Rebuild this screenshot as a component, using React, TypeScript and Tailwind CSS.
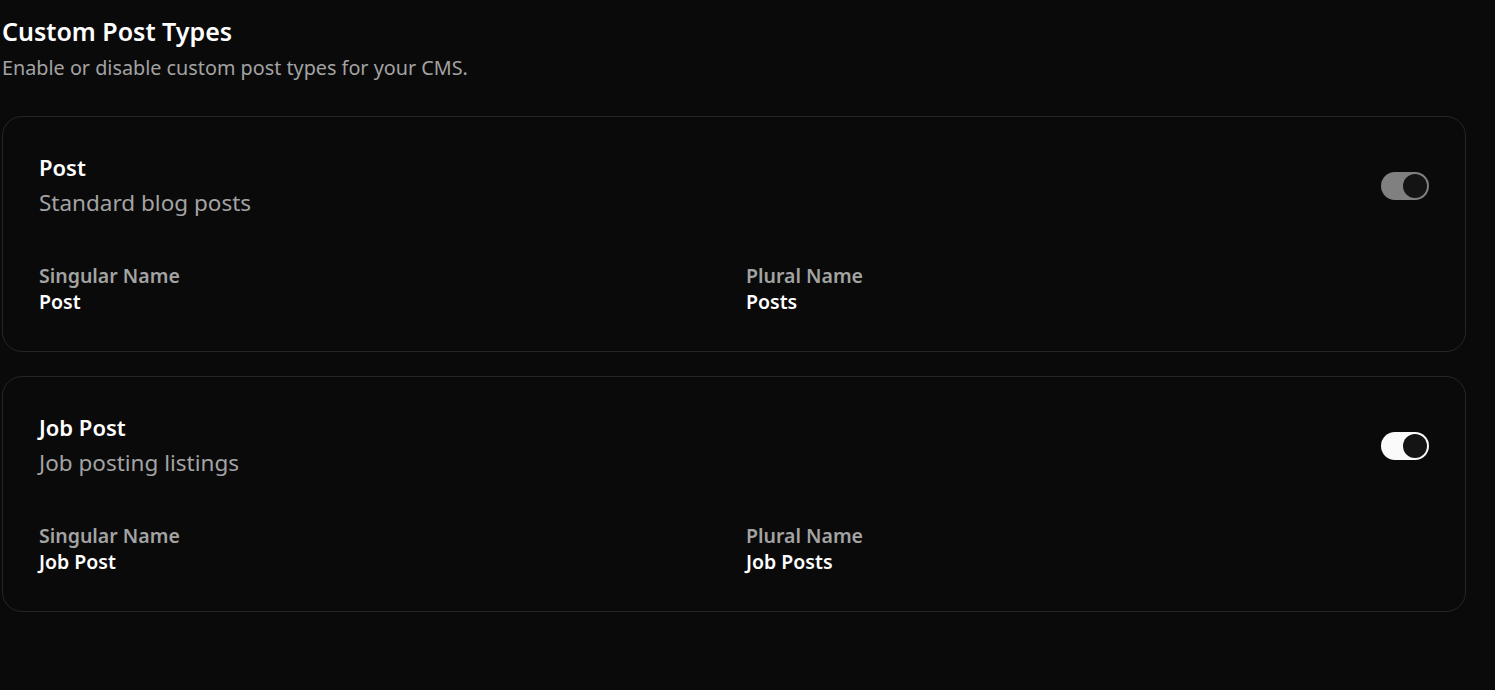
import { useState } from 'react';

type PostType = {
  id: string;
  name: string;
  description: string;
  singular: string;
  plural: string;
  enabled: boolean;
  muted?: boolean;
};

const initialTypes: PostType[] = [
  { id: 'post', name: 'Post', description: 'Standard blog posts', singular: 'Post', plural: 'Posts', enabled: true, muted: true },
  { id: 'job', name: 'Job Post', description: 'Job posting listings', singular: 'Job Post', plural: 'Job Posts', enabled: true },
];

function Toggle({ on, muted, onChange }: { on: boolean; muted?: boolean; onChange: () => void }) {
  return (
    <button
      type="button"
      onClick={onChange}
      className={`flex h-7 w-12 shrink-0 items-center rounded-full p-0.5 ${on ? 'justify-end' : 'justify-start'} ${
        muted ? 'bg-[#808080]' : 'bg-[#fafafa]'
      }`}
    >
      <span className="h-6 w-6 rounded-full bg-[#141414]" />
    </button>
  );
}

export default function App() {
  const [types, setTypes] = useState(initialTypes);

  const toggle = (id: string) =>
    setTypes((prev) => prev.map((t) => (t.id === id ? { ...t, enabled: !t.enabled } : t)));

  return (
    <div
      className="min-h-screen bg-[#0a0a0a] pl-[2px] pr-[29px] pt-[14px] text-white"
      style={{ fontFamily: '"Noto Sans", "Open Sans", sans-serif' }}
    >
      <h1 className="text-[25px] font-semibold leading-[34px]">Custom Post Types</h1>
      <p className="mt-[6px] text-[19.8px] leading-[28px] text-[#a3a3a3]">Enable or disable custom post types for your CMS.</p>

      <div className="mt-[34px] flex flex-col gap-6">
        {types.map((t) => (
          <div key={t.id} className="rounded-[20px] border border-[#262626] px-9 pb-9 pt-9">
            <div className="flex items-start justify-between">
              <div>
                <h2 className="text-[22px] font-semibold leading-[28px]">{t.name}</h2>
                <p className="mt-[6px] text-[22.5px] leading-[31px] text-[#a3a3a3]">{t.description}</p>
              </div>
              <div className="pt-[19px]">
                <Toggle on={t.enabled} muted={t.muted} onChange={() => toggle(t.id)} />
              </div>
            </div>
            <div className="mt-[45px] grid grid-cols-2 gap-6">
              <div>
                <div className="text-[19.5px] font-semibold leading-[26px] text-[#a3a3a3]">Singular Name</div>
                <div className="text-[19.5px] font-semibold leading-[26px]">{t.singular}</div>
              </div>
              <div>
                <div className="text-[19.5px] font-semibold leading-[26px] text-[#a3a3a3]">Plural Name</div>
                <div className="text-[19.5px] font-semibold leading-[26px]">{t.plural}</div>
              </div>
            </div>
          </div>
        ))}
      </div>
    </div>
  );
}
